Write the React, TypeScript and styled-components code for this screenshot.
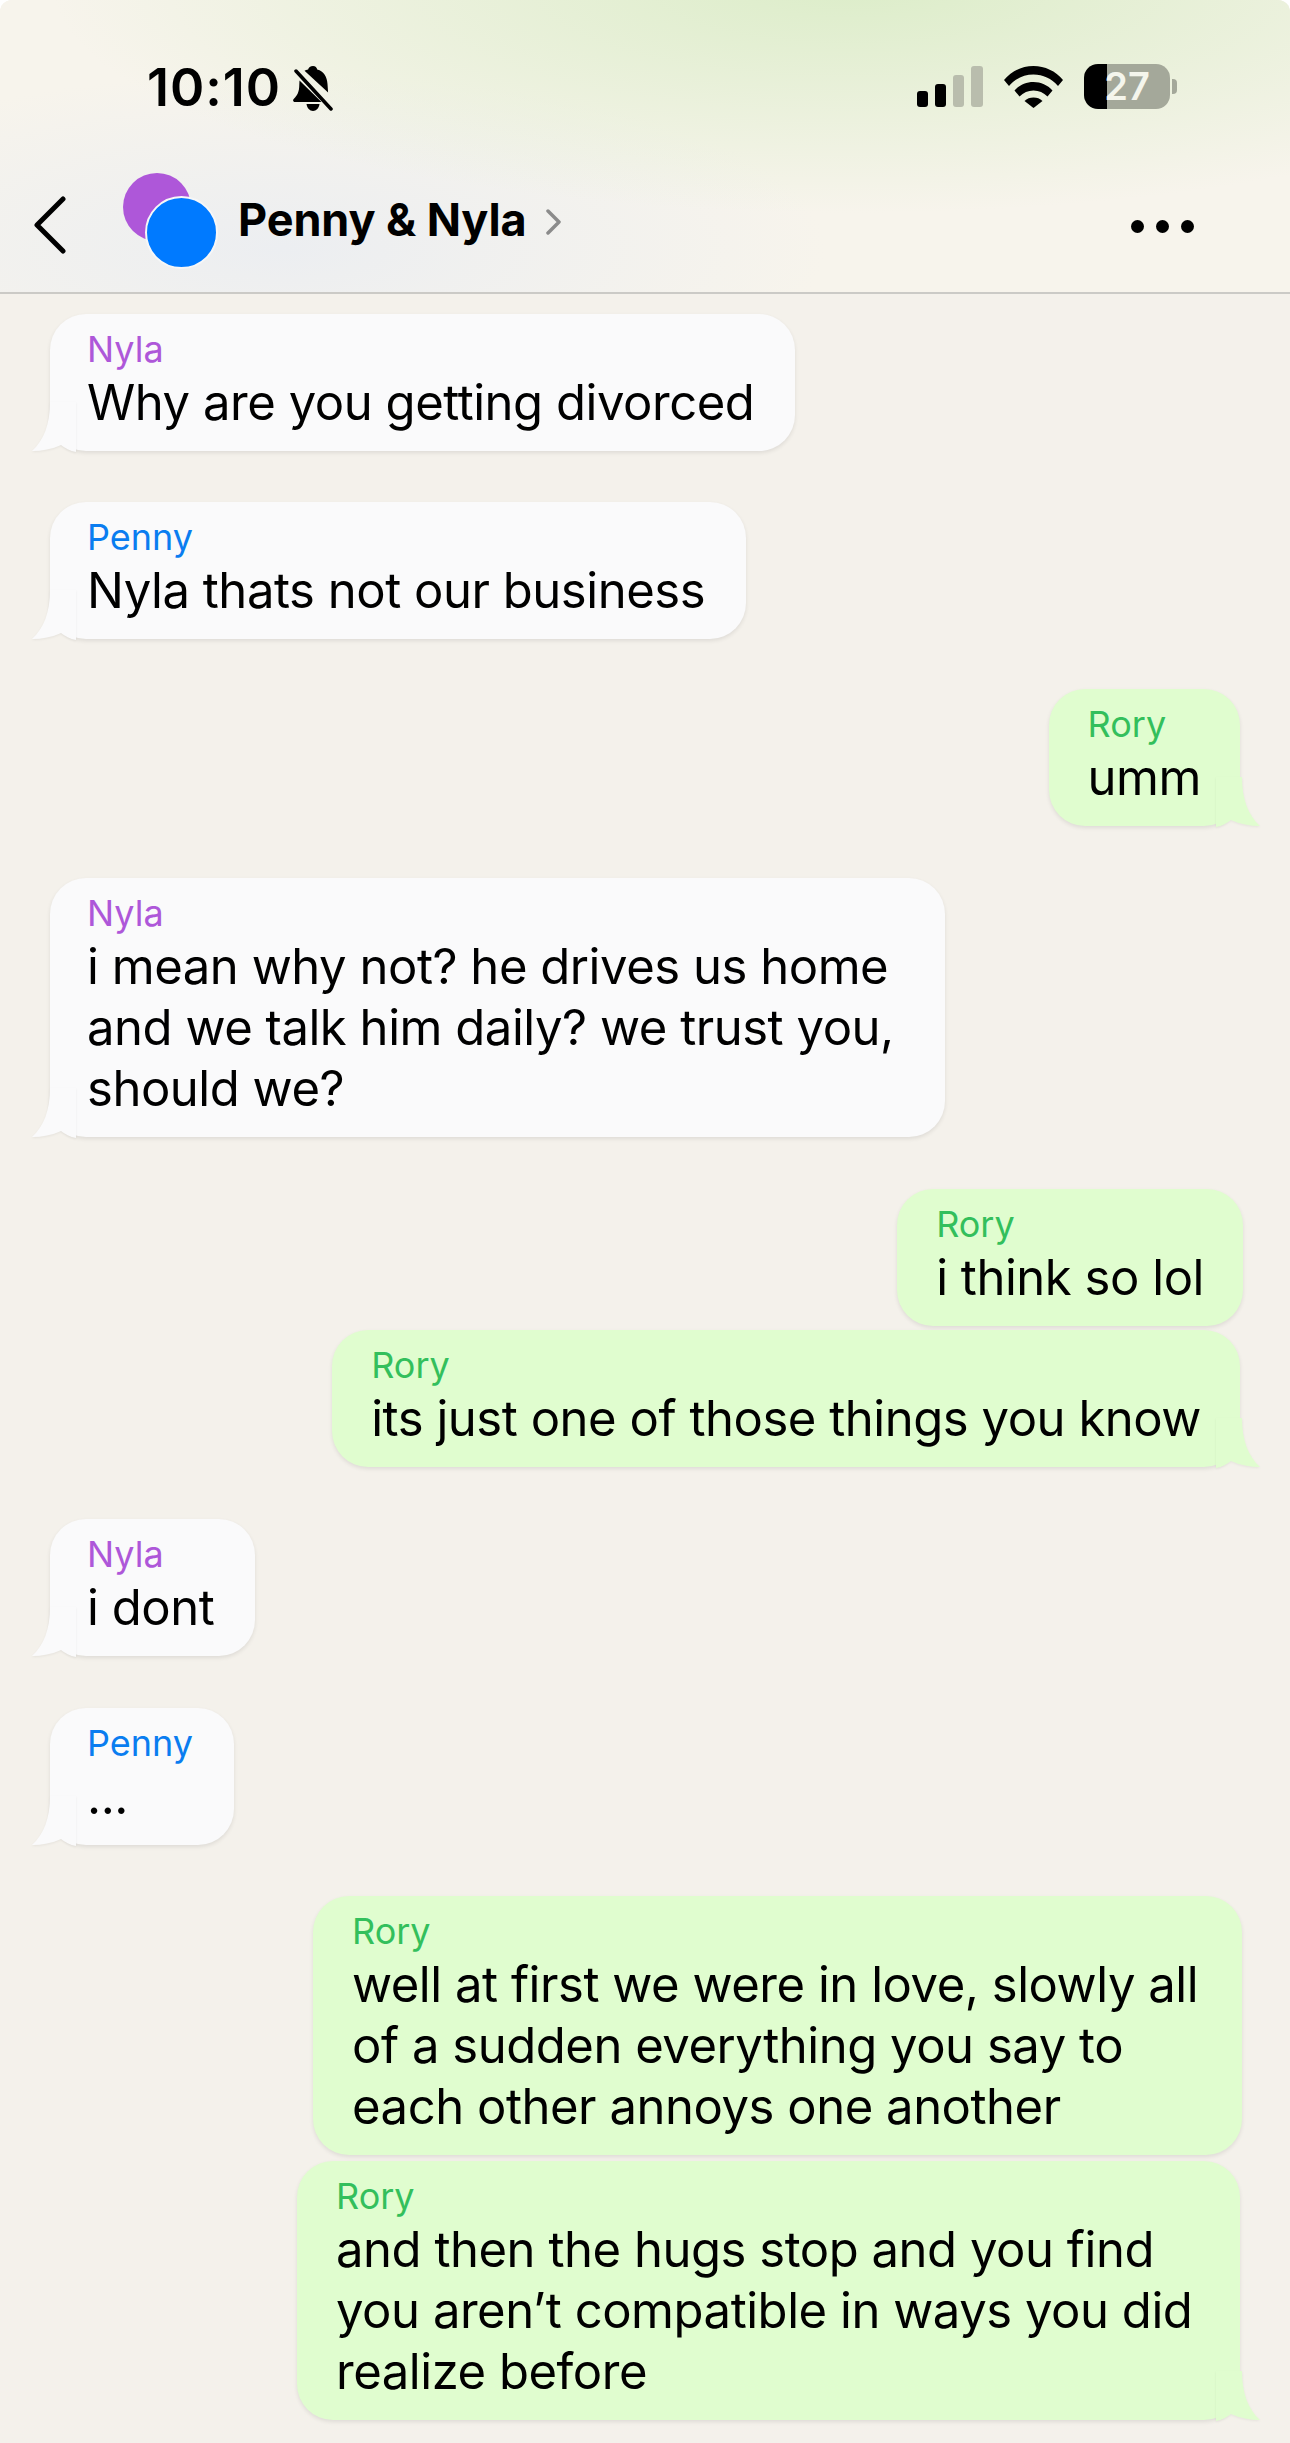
import React from 'react';
import styled, { createGlobalStyle } from 'styled-components';

const GlobalStyle = createGlobalStyle`
  html, body {
    margin: 0;
    padding: 0;
    height: 2443px;
    overflow: hidden;
    background: #fff;
  }
`;

const Screen = styled.div`
  width: 1290px;
  height: 2443px;
  overflow: hidden;
  border-radius: 12px 12px 0 0;
  background: #f4f1eb;
  font-family: Inter, 'Noto Sans', sans-serif;
  color: #000;
`;

const Header = styled.header`
  height: 294px;
  box-sizing: border-box;
  border-bottom: 2px solid #cbcac6;
  background:
    radial-gradient(ellipse 62% 78% at 66% -5%, #dcedc9 0%, rgba(223, 238, 207, 0) 100%),
    radial-gradient(ellipse 42% 60% at 22% 85%, #eceef1 0%, rgba(236, 238, 241, 0) 100%),
    #f7f4ec;
  display: flex;
  flex-direction: column;
`;

const StatusBar = styled.div`
  height: 172px;
  box-sizing: border-box;
  padding: 60px 120px 0 147px;
  display: flex;
  justify-content: space-between;
  align-items: flex-start;
`;

const TimeGroup = styled.div`
  display: flex;
  align-items: center;
  gap: 12px;
`;

const Time = styled.span`
  font-size: 52px;
  line-height: 56px;
  font-weight: 600;
  letter-spacing: 1px;
`;

const StatusIcons = styled.div`
  display: flex;
  align-items: center;
  gap: 21px;
  padding-top: 4px;
`;

const Battery = styled.div`
  position: relative;
  width: 86px;
  height: 45px;
  border-radius: 14px;
  background: linear-gradient(to right, #000 27%, #a4a89a 27%);
  color: #f4f5ec;
  font-size: 38px;
  line-height: 45px;
  font-weight: 600;
  text-align: center;

  &::after {
    content: '';
    position: absolute;
    right: -7px;
    top: 15px;
    width: 5px;
    height: 15px;
    border-radius: 0 4px 4px 0;
    background: #a4a89a;
  }
`;

const NavBar = styled.div`
  flex: 1;
  display: flex;
  align-items: center;
  padding: 0 96px 14px 34px;
`;

const Avatars = styled.div`
  position: relative;
  width: 115px;
  height: 96px;
  margin: 0 0 9px 57px;
  flex-shrink: 0;
`;

const Avatar = styled.span<{ $color: string; $front?: boolean }>`
  position: absolute;
  box-sizing: border-box;
  width: ${(p) => (p.$front ? 73 : 68)}px;
  height: ${(p) => (p.$front ? 73 : 68)}px;
  border-radius: 50%;
  background: ${(p) => p.$color};
  left: ${(p) => (p.$front ? 22 : 0)}px;
  top: ${(p) => (p.$front ? 23 : 0)}px;
  border: ${(p) => (p.$front ? '2px solid #f6f7f8' : 'none')};
`;

const Title = styled.span`
  font-size: 45px;
  font-weight: 700;
  letter-spacing: -0.1px;
  margin: 0 18px 12px 0;
`;

const More = styled.div`
  margin: 3px 0 0 auto;
  display: flex;
  gap: 12px;
`;

const Dot = styled.span`
  width: 13px;
  height: 13px;
  border-radius: 50%;
  background: #000;
`;

const Messages = styled.main`
  display: flex;
  flex-direction: column;
  padding: 20px 50px 0;
`;

const Bubble = styled.div<{ $mine?: boolean; $width?: number; $gap: number; $nudge?: number }>`
  position: relative;
  box-sizing: border-box;
  align-self: ${(p) => (p.$mine ? 'flex-end' : 'flex-start')};
  width: ${(p) => (p.$width ? `${p.$width}px` : 'auto')};
  margin-top: ${(p) => p.$gap}px;
  margin-right: ${(p) => (p.$nudge ? -p.$nudge : 0)}px;
  padding: 13px ${(p) => (p.$mine ? '39px 18px 39px' : '41px 18px 37px')};
  border-radius: 36px;
  background: ${(p) => (p.$mine ? '#e0fdcf' : '#fafafb')};
  box-shadow: 0 2px 4px rgba(0, 0, 0, 0.09);
`;

const Sender = styled.div<{ $color: string }>`
  font-size: 36px;
  line-height: 45px;
  color: ${(p) => p.$color};
`;

const Body = styled.div`
  font-size: 49px;
  line-height: 61px;
  letter-spacing: -0.46px;
  white-space: pre-line;
`;

const TailShape = styled.svg<{ $mine?: boolean }>`
  position: absolute;
  bottom: -1px;
  width: 44px;
  height: 50px;
  filter: drop-shadow(0 1px 1px rgba(0, 0, 0, 0.06));
  ${(p) => (p.$mine ? 'right: -20px; transform: scaleX(-1);' : 'left: -18px;')}
`;

const TitleChevron = styled.svg`
  margin-bottom: 6px;
`;

const Tail = ({ mine }: { mine?: boolean }) => (
  <TailShape $mine={mine} viewBox="0 0 44 50">
    <path
      d="M18 0 C18 22 12 38 0 49 C10 49 20 47 29 43 C33 46 38 49 44 50 L44 0 Z"
      fill={mine ? '#e0fdcf' : '#fafafb'}
    />
  </TailShape>
);

const COLORS: Record<string, string> = {
  Nyla: '#ae57d9',
  Penny: '#0a7df0',
  Rory: '#33bf5c',
};

type Msg = {
  from: string;
  text: string;
  gap: number;
  tail?: boolean;
  width?: number;
  nudge?: number;
};

const MESSAGES: Msg[] = [
  { from: 'Nyla', text: 'Why are you getting divorced', gap: 0, tail: true },
  { from: 'Penny', text: 'Nyla thats not our business', gap: 51, tail: true },
  { from: 'Rory', text: 'umm', gap: 50, tail: true },
  {
    from: 'Nyla',
    text: 'i mean why not? he drives us home\nand we talk him daily? we trust you,\nshould we?',
    gap: 52,
    tail: true,
    width: 895,
  },
  { from: 'Rory', text: 'i think so lol', gap: 52, nudge: 3 },
  { from: 'Rory', text: 'its just one of those things you know', gap: 4, tail: true },
  { from: 'Nyla', text: 'i dont', gap: 52, tail: true },
  { from: 'Penny', text: '...', gap: 52, tail: true },
  {
    from: 'Rory',
    text: 'well at first we were in love, slowly all\nof a sudden everything you say to\neach other annoys one another',
    gap: 51,
    width: 929,
    nudge: 2,
  },
  {
    from: 'Rory',
    text: 'and then the hugs stop and you find\nyou aren\u2019t compatible in ways you did\nrealize before',
    gap: 6,
    tail: true,
    width: 943,
  },
];

const BellOff = () => (
  <svg width="41" height="45" viewBox="0 0 41 45">
    <path d="M20 0c2.400 0 4 1.500 4.200 3.600C31 5.400 34 11 34.500 18l.6 8.500L11.500 4.800c1-.5 2.200-.9 3.600-1.200C15.400 1.500 17.600 0 20 0Z" />
    <path d="M6.500 14.500 28.500 36H2C.5 36-.3 35 .3 33.600 2.500 31 5.800 28 6.200 21Z" />
    <path d="M13.500 38h13c-.5 4-3.200 7-6.500 7s-6-3-6.500-7Z" />
    <path d="M3 5 38 43" stroke="#000" strokeWidth="3.500" strokeLinecap="round" />
  </svg>
);

const Signal = () => (
  <svg width="66" height="41" viewBox="0 0 66 41">
    <rect x="0" y="25" width="11" height="16" rx="3" fill="#000" />
    <rect x="18" y="18" width="11" height="23" rx="3" fill="#000" />
    <rect x="36" y="9" width="11" height="32" rx="3" fill="#b9bdad" />
    <rect x="54" y="0" width="12" height="41" rx="3" fill="#b9bdad" />
  </svg>
);

const Wifi = () => (
  <svg width="59" height="42" viewBox="0 0 59 42">
    <path d="M0 14C7.500 5 18 0 29.500 0S51.500 5 59 14l-5 6C47.500 12.500 39 8.500 29.500 8.500S11.500 12.500 5 20Z" />
    <path d="M10.500 24.500C15.500 19 22 16 29.500 16S43.500 19 48.500 24.500l-5 6C39.500 26.500 35 24.500 29.500 24.500S19.500 26.500 15.500 30.500Z" />
    <path d="M20.500 35C23 32.500 26 31.500 29.500 31.500S36 32.500 38.500 35l-9 7Z" />
  </svg>
);

const BackChevron = () => (
  <svg width="32" height="58" viewBox="0 0 32 58">
    <path d="M29 3 3 29l26 26" fill="none" stroke="#000" strokeWidth="5" strokeLinecap="round" strokeLinejoin="round" />
  </svg>
);

const SmallChevron = () => (
  <TitleChevron width="17" height="26" viewBox="0 0 17 26">
    <path d="M3 2l11 11L3 24" fill="none" stroke="#8b8b8b" strokeWidth="3.500" strokeLinecap="round" strokeLinejoin="round" />
  </TitleChevron>
);

const App = () => (
  <Screen>
    <GlobalStyle />
    <Header>
      <StatusBar>
        <TimeGroup>
          <Time>10:10</Time>
          <BellOff />
        </TimeGroup>
        <StatusIcons>
          <Signal />
          <Wifi />
          <Battery>27</Battery>
        </StatusIcons>
      </StatusBar>
      <NavBar>
        <BackChevron />
        <Avatars>
          <Avatar $color="#ae57d9" />
          <Avatar $color="#007aff" $front />
        </Avatars>
        <Title>Penny &amp; Nyla</Title>
        <SmallChevron />
        <More>
          <Dot />
          <Dot />
          <Dot />
        </More>
      </NavBar>
    </Header>
    <Messages>
      {MESSAGES.map((m, i) => (
        <Bubble
          key={i}
          $mine={m.from === 'Rory'}
          $gap={m.gap}
          $width={m.width}
          $nudge={m.nudge}
        >
          {m.tail && <Tail mine={m.from === 'Rory'} />}
          <Sender $color={COLORS[m.from]}>{m.from}</Sender>
          <Body>{m.text}</Body>
        </Bubble>
      ))}
    </Messages>
  </Screen>
);

export default App;
